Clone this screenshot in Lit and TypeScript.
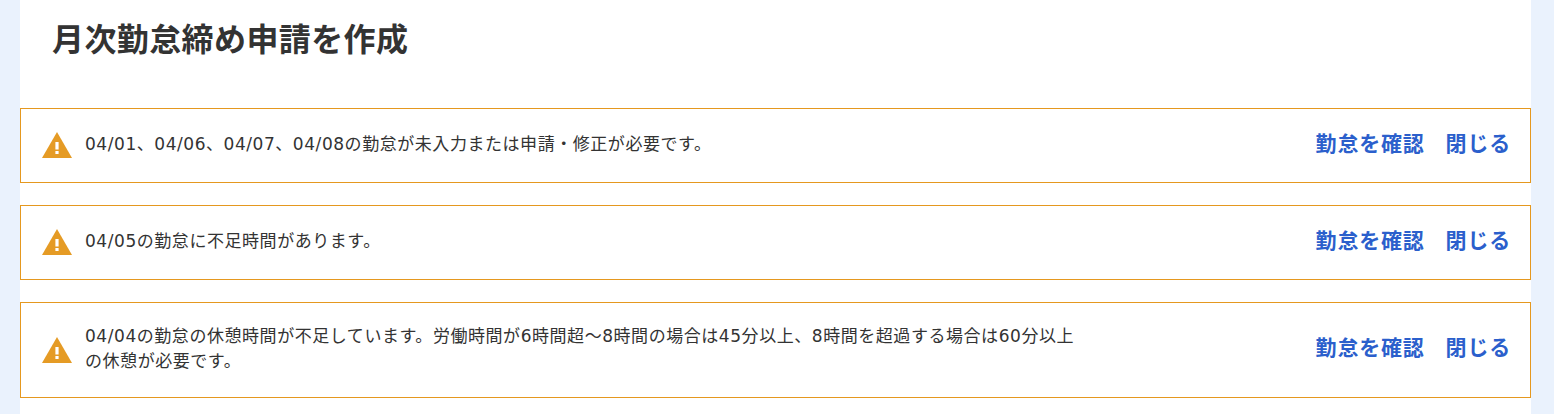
import { LitElement, html, css, svg } from "lit";
import { customElement } from "lit/decorators.js";

const alerts = [
  "04/01、04/06、04/07、04/08の勤怠が未入力または申請・修正が必要です。",
  "04/05の勤怠に不足時間があります。",
  "04/04の勤怠の休憩時間が不足しています。労働時間が6時間超〜8時間の場合は45分以上、8時間を超過する場合は60分以上の休憩が必要です。",
];

@customElement("app-root")
export class AppRoot extends LitElement {
  static styles = css`
    :host { display: block; background: #eaf2fd; height: 414px; overflow: hidden; font-family: "Noto Sans CJK JP", "Noto Sans", sans-serif; }
    .page { margin: 0 23px 0 20px; background: #fff; height: 414px; display: flex; flex-direction: column; }
    h1 { margin: 0; padding: 13px 0 0 32px; height: 108px; box-sizing: border-box; font-size: 32px; line-height: 48px; font-weight: 700; color: #333; letter-spacing: 0.4px; }
    .list { display: flex; flex-direction: column; gap: 22px; }
    .alert { box-sizing: border-box; border: 1px solid #e5981f; padding: 20px 21px 24px; height: 75px; display: flex; align-items: center; }
    .alert.tall { height: 96px; }
    .icon { width: 30px; height: 26px; flex: none; margin-top: 3px; margin-right: 13px; }
    .msg { width: 995px; margin-top: 2px; font-family: "DejaVu Sans", "Noto Sans CJK JP", sans-serif; font-size: 17px; line-height: 25px; color: #333; letter-spacing: 0.55px; }
    .actions { margin-left: auto; margin-right: -2px; margin-bottom: 3px; display: flex; gap: 21px; font-size: 21px; font-weight: 700; color: #2b5fcc; line-height: 25px; letter-spacing: 0.8px; }
    .actions a { cursor: pointer; }
  `;
  render() {
    return html`<div class="page">
      <h1>月次勤怠締め申請を作成</h1>
      <div class="list">
        ${alerts.map((m, i) => html`<div class="alert ${i === 2 ? "tall" : ""}">
          <svg class="icon" viewBox="0 0 30 26">
            ${svg`<path fill="#e59b25" d="M15 0 L30 26 H0 Z"/><rect x="13.4" y="10" width="3.2" height="7.5" fill="#fff"/><rect x="13.4" y="19" width="3.2" height="3" fill="#fff"/>`}
          </svg>
          <div class="msg">${m}</div>
          <div class="actions"><a>勤怠を確認</a><a>閉じる</a></div>
        </div>`)}
      </div>
    </div>`;
  }
}
